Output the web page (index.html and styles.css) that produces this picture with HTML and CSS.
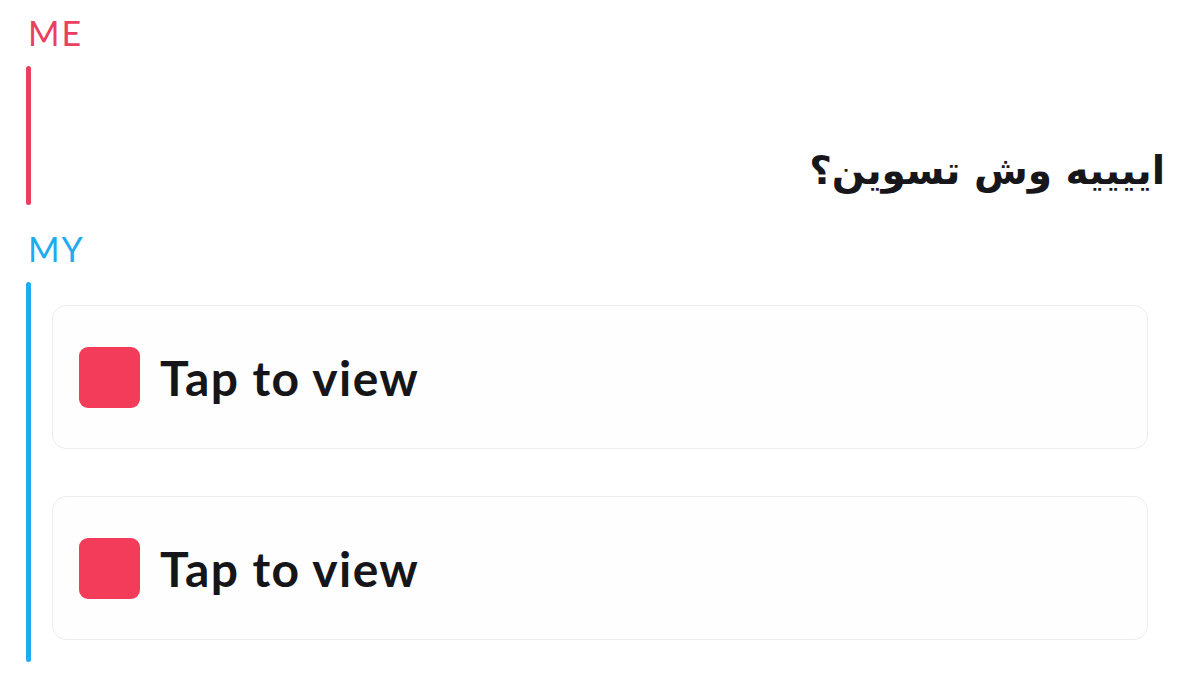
FILE: index.html
```html
<!DOCTYPE html>
<html lang="en">
  <head>
    <meta charset="UTF-8" />
    <meta name="viewport" content="width=device-width, initial-scale=1.0" />
    <title>Chat</title>
    <link rel="stylesheet" href="styles.css">
  </head>
  <body>
    <div class="chat">
      <div class="group group-me">
        <div class="sender">ME</div>
        <div class="thread">
          <div class="bar"></div>
          <div class="messages">
            <p class="text" dir="rtl">اييييه وش تسوين؟</p>
          </div>
        </div>
      </div>

      <div class="group group-my">
        <div class="sender">MY</div>
        <div class="thread">
          <div class="bar"></div>
          <div class="messages snaps">
            <div class="snap">
              <span class="snap-icon"></span>
              <span class="snap-label">Tap to view</span>
            </div>
            <div class="snap">
              <span class="snap-icon"></span>
              <span class="snap-label">Tap to view</span>
            </div>
          </div>
        </div>
      </div>
    </div>
  </body>
</html>
```

FILE: styles.css
```css
*,
*::before,
*::after {
  box-sizing: border-box;
}
* {
  margin: 0;
}
body {
  background-color: #ffffff;
  font-family: Lato, "Open Sans", sans-serif;
  width: 1200px;
  height: 676px;
  overflow: hidden;
}

.chat {
  display: flex;
  flex-direction: column;
  padding: 16px 35px 0 26px;
}

.group {
  display: flex;
  flex-direction: column;
}

.group-me {
  color: #ea3f5e;
}

.group-my {
  color: #1eabf0;
  margin-top: 27px;
}

.sender {
  font-size: 34px;
  line-height: 34px;
  letter-spacing: 2px;
  padding-left: 2px;
  margin-bottom: 16px;
}

.thread {
  display: flex;
  gap: 21px;
}

.bar {
  width: 5px;
  border-radius: 3px;
  background-color: currentColor;
  flex-shrink: 0;
}

.messages {
  flex: 1;
  display: flex;
  flex-direction: column;
}

.group-me .messages {
  height: 139px;
  justify-content: flex-end;
  padding-bottom: 8px;
}

.text {
  font-family: "DejaVu Sans", "Noto Sans", sans-serif;
  font-weight: bold;
  font-size: 39px;
  line-height: 52px;
  color: #17171b;
  text-align: right;
}

.snaps {
  gap: 47px;
  padding: 23px 17px 22px 0;
}

.snap {
  display: flex;
  align-items: center;
  gap: 20px;
  height: 144px;
  padding-left: 26px;
  border: 1px solid #ededed;
  border-radius: 14px;
  background-color: #fefefe;
}

.snap-icon {
  width: 61px;
  height: 61px;
  border-radius: 9px;
  background-color: #f33b5a;
}

.snap-label {
  font-size: 48px;
  font-weight: bold;
  letter-spacing: 1.4px;
  color: #16161a;
}
```
